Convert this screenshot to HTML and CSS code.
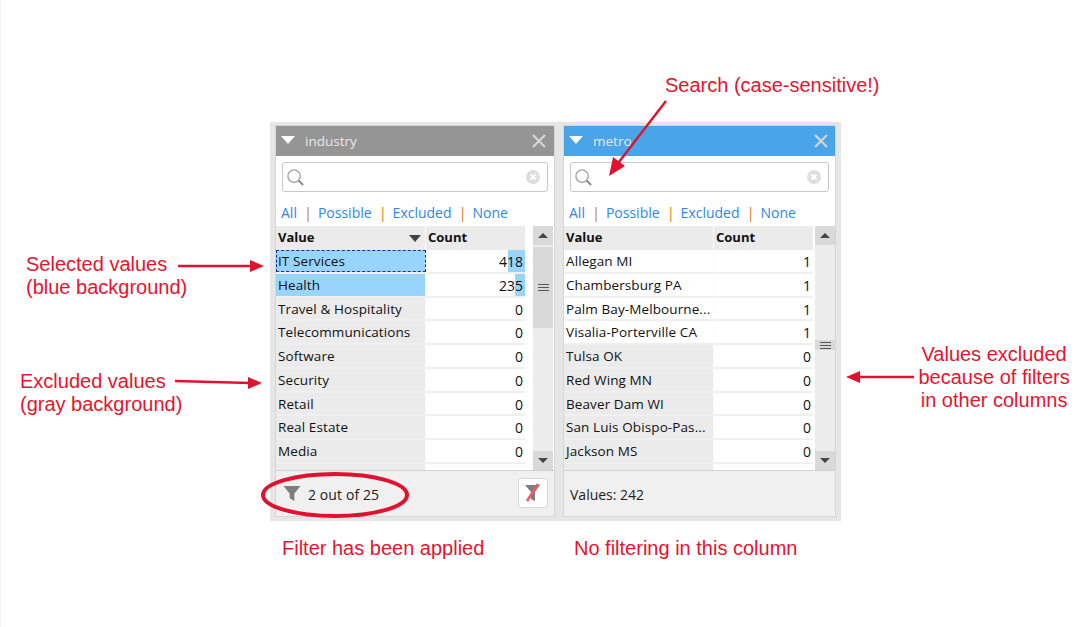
FILE: index.html
```html
<!DOCTYPE html>
<html lang="en">
<head>
<meta charset="utf-8">
<title>Column filters</title>
<link rel="stylesheet" href="styles.css">
</head>
<body>
<main class="stage">
  <div class="frame">
    <section class="panel">
      <header class="head head-gray">
        <svg class="tri" viewBox="0 0 14 8"><path d="M0 0H14L7 8Z"/></svg>
        <span class="title">industry</span>
        <svg class="close" viewBox="0 0 14 14"><path d="M1 1L13 13M13 1L1 13"/></svg>
      </header>
      <div class="search">
        <svg class="lens" viewBox="0 0 20 20"><circle cx="8.5" cy="8.5" r="6.5"/><path class="handle" d="M13.5 13.5L18 18"/></svg>
        <svg class="clear" viewBox="0 0 14 14"><circle cx="7" cy="7" r="7"/><path d="M4.5 4.5L9.5 9.5M9.5 4.5L4.5 9.5"/></svg>
      </div>
      <nav class="links"><a>All</a><i>|</i><a>Possible</a><i>|</i><a>Excluded</a><i>|</i><a>None</a></nav>
      <div class="tablewrap">
        <div class="table">
          <div class="row hdr"><div class="v">Value<svg class="sort" viewBox="0 0 12 7"><path d="M0 0H12L6 7Z"/></svg></div><div class="c">Count</div></div>
          <div class="row sel focus"><div class="v">IT Services</div><div class="n"><span class="bar" style="width:17px"></span><span class="num">418</span></div></div>
          <div class="row sel"><div class="v">Health</div><div class="n"><span class="bar" style="width:10px"></span><span class="num">235</span></div></div>
          <div class="row ex"><div class="v">Travel &amp; Hospitality</div><div class="n"><span class="num">0</span></div></div>
          <div class="row ex"><div class="v">Telecommunications</div><div class="n"><span class="num">0</span></div></div>
          <div class="row ex"><div class="v">Software</div><div class="n"><span class="num">0</span></div></div>
          <div class="row ex"><div class="v">Security</div><div class="n"><span class="num">0</span></div></div>
          <div class="row ex"><div class="v">Retail</div><div class="n"><span class="num">0</span></div></div>
          <div class="row ex"><div class="v">Real Estate</div><div class="n"><span class="num">0</span></div></div>
          <div class="row ex"><div class="v">Media</div><div class="n"><span class="num">0</span></div></div>
          <div class="row ex"><div class="v"></div><div class="n"></div></div>
        </div>
        <div class="scroll scroll-left">
          <div class="sbtn"><svg viewBox="0 0 10 5"><path d="M0 5H10L5 0Z"/></svg></div>
          <div class="thumb thumb-long"><span class="grip"></span></div>
          <div class="track"></div>
          <div class="sbtn"><svg viewBox="0 0 10 5"><path d="M0 0H10L5 5Z"/></svg></div>
        </div>
      </div>
      <footer class="foot">
        <svg class="funnel" viewBox="0 0 18 18"><path d="M0 1H18L11.5 9V17L6.5 14V9Z"/></svg>
        <span class="foot-text">2 out of 25</span>
        <button class="clearbtn" type="button"><svg viewBox="0 0 20 20"><path class="fn" d="M2 2H17L12 9V18L8 16V9Z"/><path class="slash" d="M15 1L4 18"/></svg></button>
      </footer>
    </section>
    <section class="panel panel-right">
      <header class="head head-blue">
        <svg class="tri" viewBox="0 0 14 8"><path d="M0 0H14L7 8Z"/></svg>
        <span class="title">metro</span>
        <svg class="close" viewBox="0 0 14 14"><path d="M1 1L13 13M13 1L1 13"/></svg>
      </header>
      <div class="search">
        <svg class="lens" viewBox="0 0 20 20"><circle cx="8.5" cy="8.5" r="6.5"/><path class="handle" d="M13.5 13.5L18 18"/></svg>
        <svg class="clear" viewBox="0 0 14 14"><circle cx="7" cy="7" r="7"/><path d="M4.5 4.5L9.5 9.5M9.5 4.5L4.5 9.5"/></svg>
      </div>
      <nav class="links"><a>All</a><i>|</i><a>Possible</a><i>|</i><a>Excluded</a><i>|</i><a>None</a></nav>
      <div class="tablewrap">
        <div class="table">
          <div class="row hdr"><div class="v">Value</div><div class="c">Count</div></div>
          <div class="row"><div class="v">Allegan MI</div><div class="n"><span class="num">1</span></div></div>
          <div class="row"><div class="v">Chambersburg PA</div><div class="n"><span class="num">1</span></div></div>
          <div class="row"><div class="v">Palm Bay-Melbourne...</div><div class="n"><span class="num">1</span></div></div>
          <div class="row"><div class="v">Visalia-Porterville CA</div><div class="n"><span class="num">1</span></div></div>
          <div class="row ex"><div class="v">Tulsa OK</div><div class="n"><span class="num">0</span></div></div>
          <div class="row ex"><div class="v">Red Wing MN</div><div class="n"><span class="num">0</span></div></div>
          <div class="row ex"><div class="v">Beaver Dam WI</div><div class="n"><span class="num">0</span></div></div>
          <div class="row ex"><div class="v">San Luis Obispo-Pas...</div><div class="n"><span class="num">0</span></div></div>
          <div class="row ex"><div class="v">Jackson MS</div><div class="n"><span class="num">0</span></div></div>
          <div class="row ex"><div class="v"></div><div class="n"></div></div>
        </div>
        <div class="scroll scroll-right">
          <div class="sbtn"><svg viewBox="0 0 10 5"><path d="M0 5H10L5 0Z"/></svg></div>
          <div class="track track-top"></div>
          <div class="thumb thumb-short"><span class="grip"></span></div>
          <div class="track"></div>
          <div class="sbtn"><svg viewBox="0 0 10 5"><path d="M0 0H10L5 5Z"/></svg></div>
        </div>
      </div>
      <footer class="foot foot-right">
        <span class="foot-text">Values: 242</span>
      </footer>
    </section>
  </div>

  <p class="note note-search">Search (case-sensitive!)</p>
  <p class="note note-selected">Selected values<br>(blue background)</p>
  <p class="note note-excluded">Excluded values<br>(gray background)</p>
  <p class="note note-others">Values excluded<br>because of filters<br>in other columns</p>
  <p class="note note-applied">Filter has been applied</p>
  <p class="note note-none">No filtering in this column</p>

  <svg class="marks" viewBox="0 0 1079 627">
    <path class="ln" d="M666 101L612 171"/>
    <path class="hd" d="M609 176L613 157L625 166Z"/>
    <path class="ln" d="M178 266L252 266"/>
    <path class="hd" d="M264 266L250 260V272Z"/>
    <path class="ln" d="M175 381L250 383"/>
    <path class="hd" d="M262 383L248 377V389Z"/>
    <path class="ln" d="M914 377H858"/>
    <path class="hd" d="M846 377L860 371V383Z"/>
    <ellipse class="ring" cx="335" cy="495" rx="72" ry="21"/>
  </svg>
</main>
</body>
</html>
```
FILE: styles.css
```css
* { box-sizing: border-box; }
html, body { margin: 0; padding: 0; background: #fff; }
body { width: 1079px; height: 627px; overflow: hidden; }

.stage {
  position: relative;
  width: 1079px;
  height: 627px;
  padding: 122px 0 0 270px;
  font-family: "Open Sans", "Noto Sans", sans-serif;
  font-size: 14px;
  color: #111;
  box-shadow: inset 1px 0 0 #f2f2f2;
}

.frame {
  width: 571px;
  height: 399px;
  padding: 4px 6px 5px;
  background: #e6e6e6;
  display: flex;
  gap: 10px;
}

.panel {
  width: 278px;
  height: 390px;
  background: #fff;
  display: flex;
  flex-direction: column;
  box-shadow: 0 0 0 1px #d6d6d6;
}
.panel-right { width: 271px; }

.head {
  height: 30px;
  flex: none;
  display: flex;
  align-items: center;
  padding: 0 7px 0 5px;
  color: #e8e8e8;
}
.head-gray { background: #959595; }
.head-blue { background: #4aa5e8; padding-right: 6px; }
.tri { width: 14px; height: 8px; fill: #fff; margin-right: 10px; margin-bottom: 2px; }
.title { flex: 1; font-size: 13.5px; }
.close { width: 14px; height: 14px; fill: none; stroke: #d8d8d8; stroke-width: 2; margin-right: 1px; margin-bottom: 1px; }

.search {
  height: 30px;
  flex: none;
  margin: 6px 6px 0;
  border: 1px solid #c9c9c9;
  border-radius: 3px;
  background: #fff;
  display: flex;
  align-items: center;
  justify-content: space-between;
  padding: 0 6px 0 3px;
}
.lens { width: 19px; height: 19px; fill: none; stroke: #a3a3a3; stroke-width: 1.4; }
.lens .handle { stroke: #8e8e8e; stroke-width: 2.2; }
.clear { width: 14px; height: 14px; margin-right: 1px; }
.clear circle { fill: #dedede; }
.clear path { stroke: #fff; stroke-width: 2; fill: none; }

.links {
  height: 34px;
  flex: none;
  padding: 11px 0 0 5px;
  font-size: 14px;
  line-height: 20px;
  color: #2f86e6;
  white-space: nowrap;
}
.links i { font-style: normal; color: #c87a1e; margin: 0 6px 0 7.3px; }

.tablewrap {
  height: 245px;
  flex: none;
  display: flex;
  overflow: hidden;
  background: #fff;
  border-bottom: 1px solid #d0d0d0;
}
.table { width: 249px; flex: none; }
.row { display: flex; height: 23.75px; border-bottom: 2px solid #f0f0f0; }
.row.hdr { height: 24px; border-bottom: 0; background: #ebebeb; font-weight: 700; font-size: 13px; line-height: 23px; }
.v {
  width: 150px;
  flex: none;
  padding-left: 2px;
  border-right: 1px solid #fbfbfb;
  line-height: 23px;
  font-size: 13.5px;
  letter-spacing: 0.1px;
  white-space: nowrap;
  position: relative;
}
.hdr .v { line-height: 23px; font-size: 13px; letter-spacing: 0; }
.c { padding-left: 2px; }
.n { flex: 1; position: relative; text-align: right; line-height: 23px; padding-right: 2px; font-size: 14px; }
.num { position: relative; }
.bar { position: absolute; top: 0; right: 0; bottom: 0; background: #97d5fd; }
.sort { position: absolute; right: 4px; top: 9px; width: 12px; height: 7px; fill: #444; }

.row.ex .v { background: #ebebeb; }
.row.sel .v { background: #97d5fd; }
.row.focus .v { outline: 1px dashed #1a2fa0; outline-offset: -1px; }

.scroll {
  width: 20px;
  margin-left: 8px;
  flex: none;
  display: flex;
  flex-direction: column;
  background: #ececec;
}
.scroll-right { margin-left: 2px; }
.sbtn {
  height: 19px;
  flex: none;
  background: #d9d9d9;
  display: flex;
  align-items: center;
  justify-content: center;
}
.sbtn svg { width: 10px; height: 5px; fill: #444; }
.thumb { flex: none; background: #d9d9d9; display: flex; align-items: center; justify-content: center; }
.thumb-long { height: 81px; margin-top: 2px; }
.thumb-short { height: 10px; }
.track { flex: 1; }
.track-top { flex: none; height: 95px; }
.grip { display: block; width: 11px; height: 7px; border-top: 1px solid #555; border-bottom: 1px solid #555; position: relative; }
.grip::after { content: ""; position: absolute; left: 0; right: 0; top: 2px; height: 1px; background: #555; }

.foot {
  flex: 1;
  background: #f0f0f0;
  display: flex;
  align-items: center;
  padding: 0 6px 0 7px;
  color: #222;
}
.foot-right { padding-left: 6px; }
.funnel { width: 18px; height: 17px; fill: #7d7d7d; margin-right: 7px; }
.foot-text { flex: 1; font-size: 14px; padding-top: 1px; }
.foot .foot-text { letter-spacing: 0.1px; }
.foot-right .foot-text { letter-spacing: 0; }
.clearbtn {
  width: 30px;
  height: 30px;
  padding: 0;
  margin-bottom: 1px;
  border: 1px solid #d8d8d8;
  border-radius: 3px;
  background: #fff;
  display: flex;
  align-items: center;
  justify-content: center;
}
.clearbtn svg { width: 20px; height: 20px; }
.clearbtn .fn { fill: #7d7d7d; }
.clearbtn .slash { stroke: #ef5a68; stroke-width: 2.6; fill: none; }

.note {
  position: absolute;
  margin: 0;
  font-family: "Liberation Sans", Arial, sans-serif;
  font-size: 20px;
  line-height: 23px;
  color: #e8132f;
  white-space: nowrap;
}
.note-search { left: 665px; top: 74px; }
.note-selected { left: 26px; top: 253px; }
.note-excluded { left: 20px; top: 370px; }
.note-others { left: 918.5px; top: 343px; text-align: center; }
.note-applied { left: 282px; top: 537px; }
.note-none { left: 574px; top: 537px; }

.marks { position: absolute; left: 0; top: 0; width: 1079px; height: 627px; pointer-events: none; }
.marks .ln { stroke: #e0122f; stroke-width: 2.4; fill: none; }
.marks .hd { fill: #e0122f; }
.marks .ring { fill: none; stroke: #e0122f; stroke-width: 4; }
```
